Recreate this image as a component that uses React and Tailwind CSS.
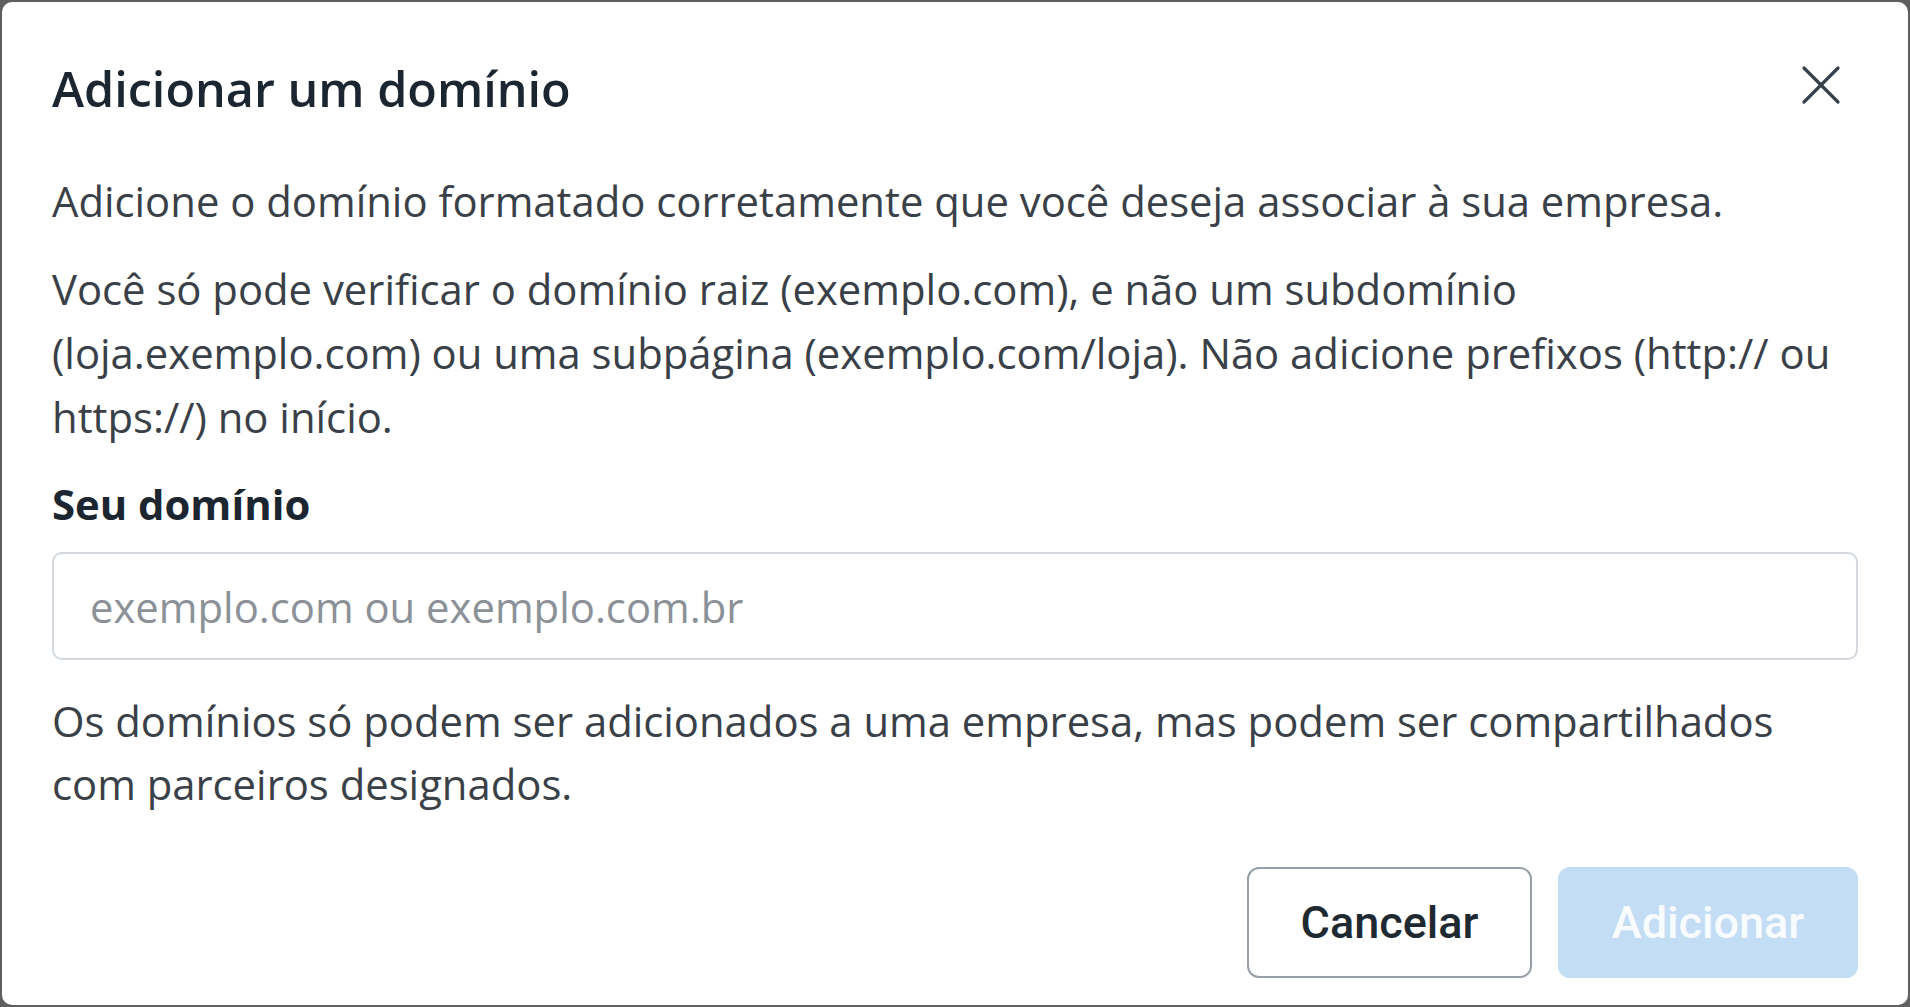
import { useState } from 'react'

function CloseIcon() {
  return (
    <svg width="40" height="40" viewBox="0 0 40 40" fill="none" stroke="#36404a" strokeWidth="3.2" strokeLinecap="round">
      <path d="M3 3 L37 37" />
      <path d="M37 3 L3 37" />
    </svg>
  )
}

export default function App() {
  const [domain, setDomain] = useState('')

  return (
    <div className="h-screen w-full bg-[#5f5f5f] p-[2px] font-['Open_Sans',sans-serif]">
      <div className="flex h-full flex-col rounded-[10px] bg-white px-[50px] pt-[58px]">
        <div className="flex items-center justify-between">
          <h1 className="text-[48.5px] font-semibold leading-[56px] text-[#1c2630]">Adicionar um domínio</h1>
          <button className="mr-[17px] mt-[-6px]" aria-label="Fechar">
            <CloseIcon />
          </button>
        </div>

        <p className="mt-[53px] text-[41.8px] leading-[64px] text-[#3a4047]">
          Adicione o domínio formatado corretamente que você deseja associar à sua empresa.
        </p>
        <p className="mt-[24px] text-[41.8px] leading-[64px] text-[#3a4047]">
          Você só pode verificar o domínio raiz (exemplo.com), e não um subdomínio
          <br />
          (loja.exemplo.com) ou uma subpágina (exemplo.com/loja). Não adicione prefixos (http:// ou
          <br />
          https://) no início.
        </p>

        <label className="mt-[27px] text-[41.8px] font-bold leading-[56px] text-[#1c2630]">Seu domínio</label>
        <input
          value={domain}
          onChange={(e) => setDomain(e.target.value)}
          placeholder="exemplo.com ou exemplo.com.br"
          className="mt-[20px] h-[108px] w-full rounded-[10px] border-2 border-[#d2d8de] px-[36px] text-[41.8px] text-[#3a4047] outline-none placeholder:text-[#8b9197]"
        />

        <p className="mt-[29px] text-[41.8px] leading-[63px] text-[#3a4047]">
          Os domínios só podem ser adicionados a uma empresa, mas podem ser compartilhados
          <br />
          com parceiros designados.
        </p>

        <div className="mt-[52px] flex justify-end gap-[26px]">
          <button className="h-[111px] w-[285px] rounded-[12px] border-2 border-[#979fa8] bg-white font-['Roboto',sans-serif] text-[45px] font-medium text-[#1f2932]">
            Cancelar
          </button>
          <button
            disabled={!domain}
            className="h-[111px] w-[300px] rounded-[12px] bg-[#c3ddf5] font-['Roboto',sans-serif] text-[45px] font-medium text-white/90"
          >
            Adicionar
          </button>
        </div>
      </div>
    </div>
  )
}
